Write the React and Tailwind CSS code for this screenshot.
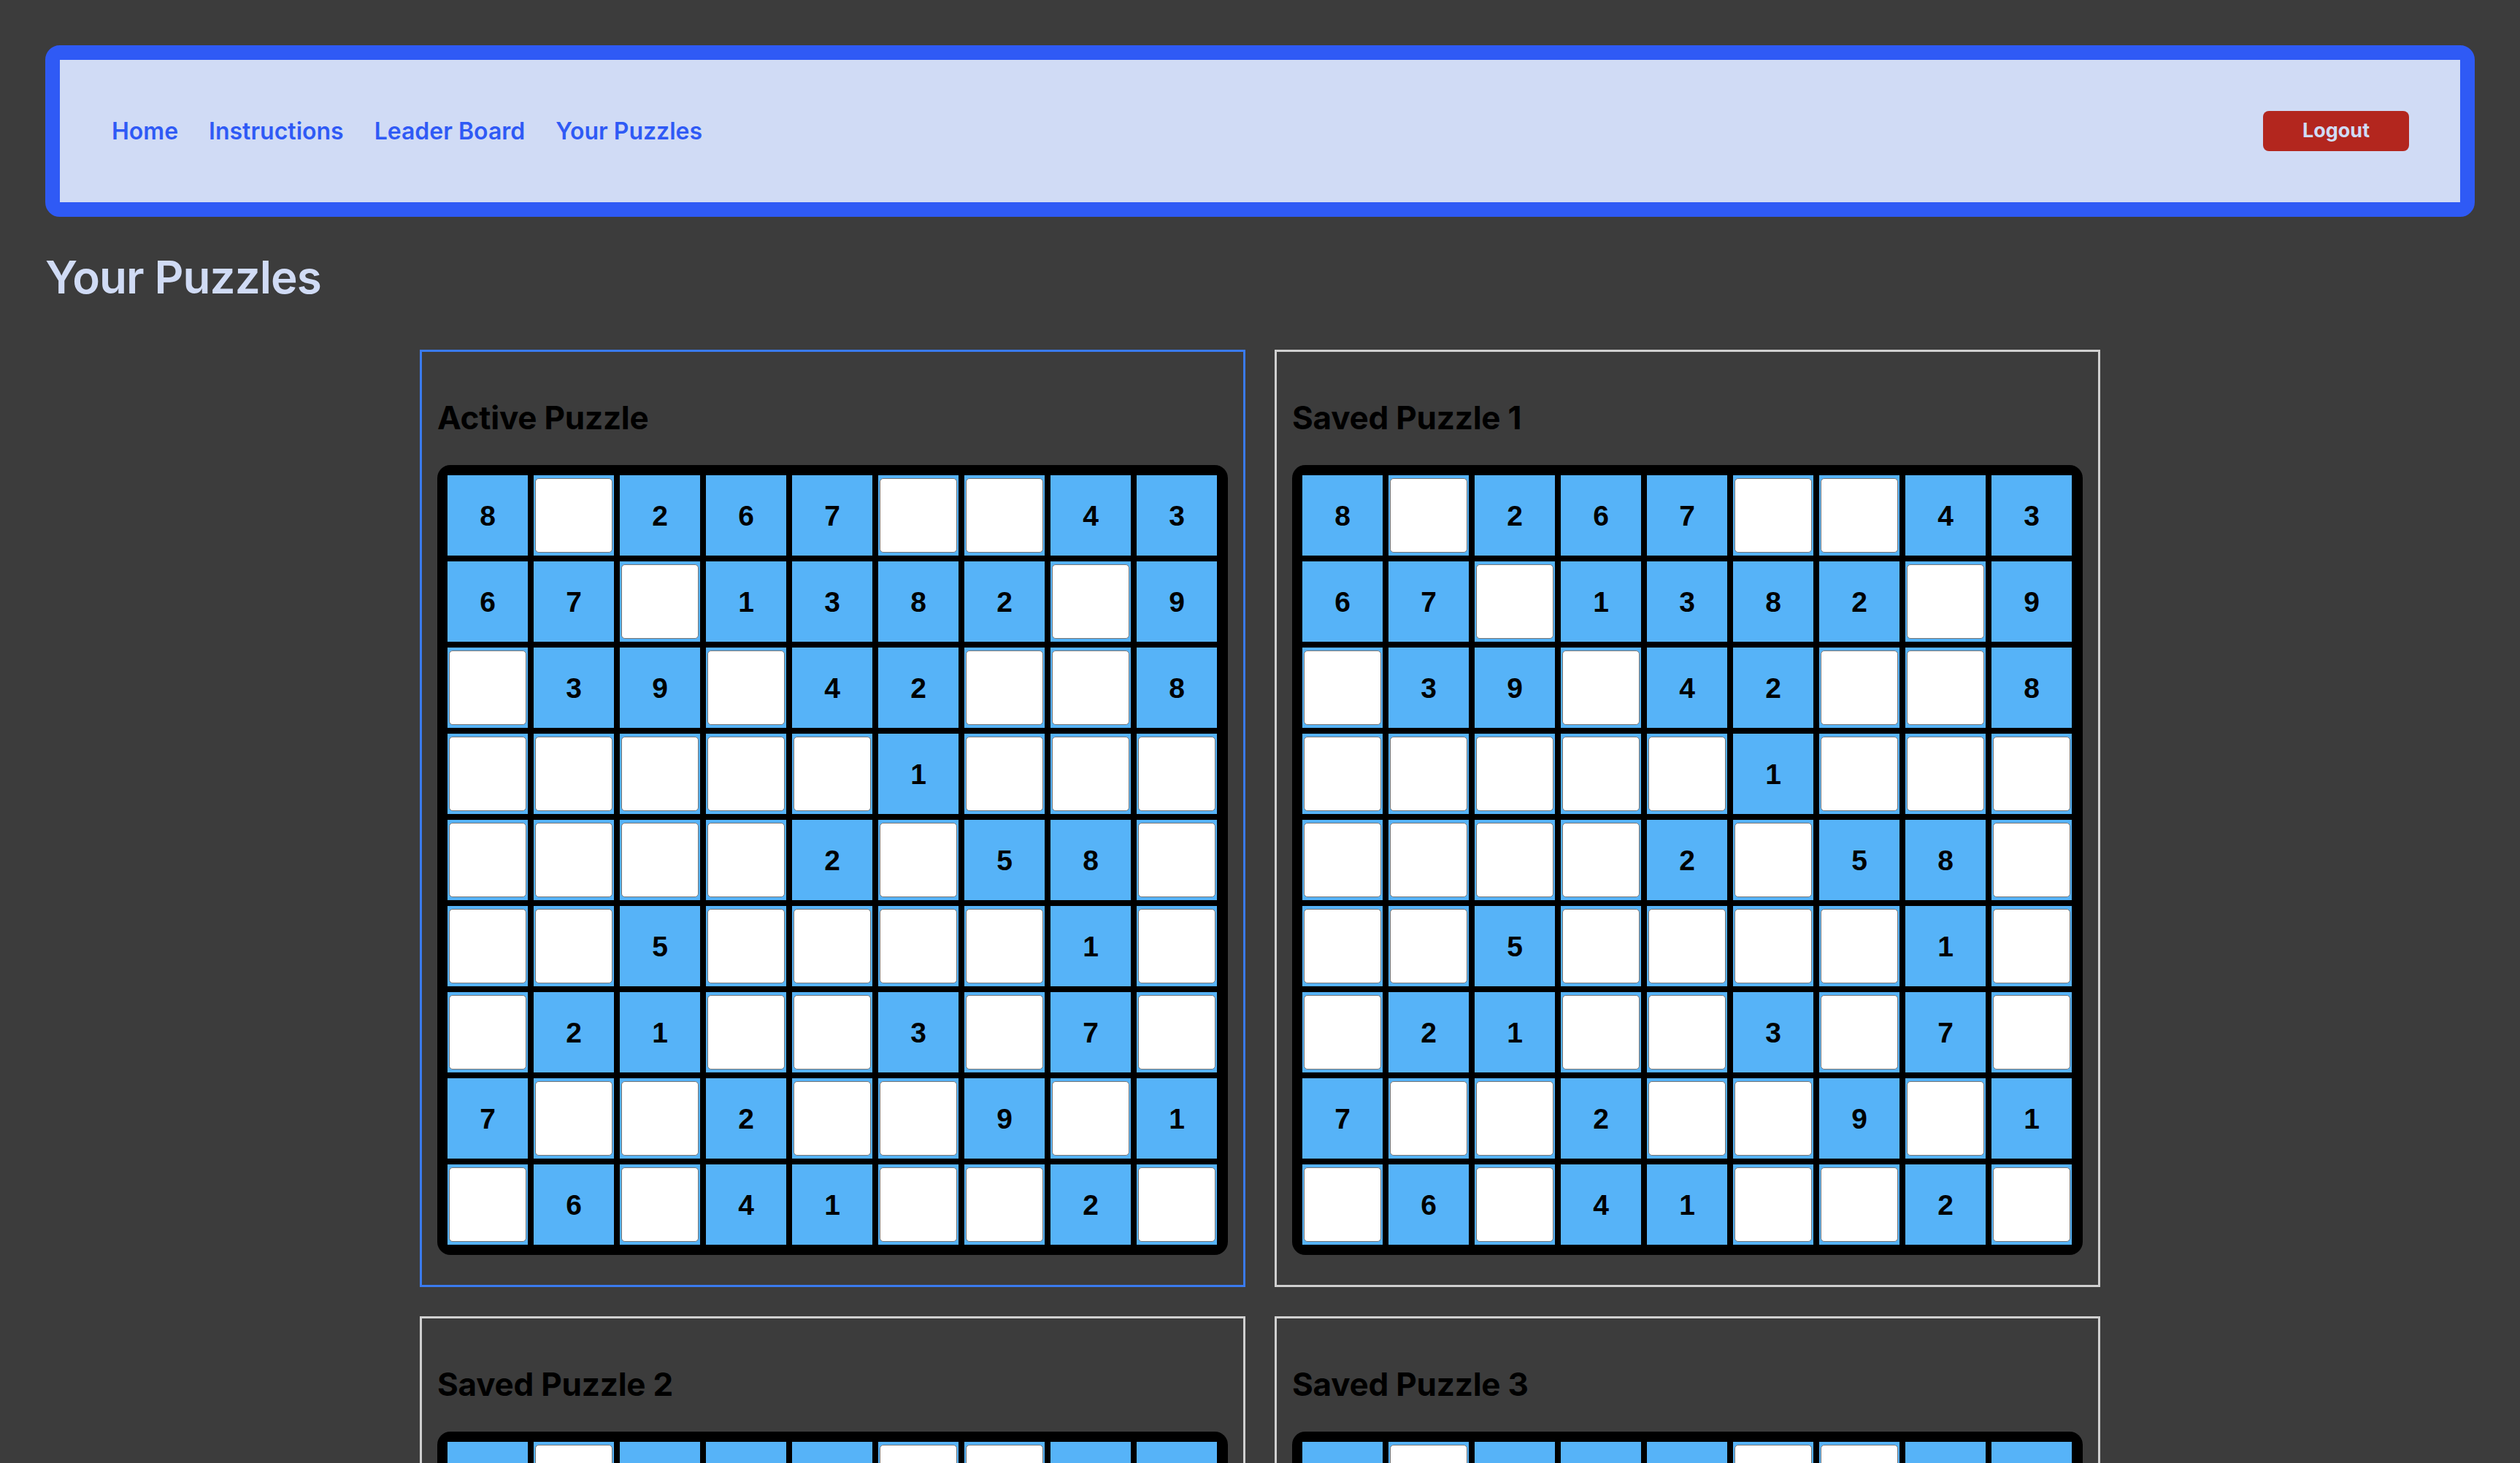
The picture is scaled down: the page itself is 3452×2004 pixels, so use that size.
import React from "react";

const PUZZLE = [
  [8, 0, 2, 6, 7, 0, 0, 4, 3],
  [6, 7, 0, 1, 3, 8, 2, 0, 9],
  [0, 3, 9, 0, 4, 2, 0, 0, 8],
  [0, 0, 0, 0, 0, 1, 0, 0, 0],
  [0, 0, 0, 0, 2, 0, 5, 8, 0],
  [0, 0, 5, 0, 0, 0, 0, 1, 0],
  [0, 2, 1, 0, 0, 3, 0, 7, 0],
  [7, 0, 0, 2, 0, 0, 9, 0, 1],
  [0, 6, 0, 4, 1, 0, 0, 2, 0],
];

function Board() {
  return (
    <div className="grid grid-cols-[repeat(9,110px)] grid-rows-[repeat(9,110px)] gap-[8px] rounded-[18px] bg-black p-[14px]">
      {PUZZLE.flat().map((v, i) => (
        <div
          key={i}
          className="flex items-center justify-center bg-[#56b3f8]"
        >
          {v ? (
            <span className="font-['Liberation_Sans',Arial,sans-serif] text-[39px] font-bold leading-none text-black">
              {v}
            </span>
          ) : (
            <div className="h-[102px] w-[106px] rounded-[5px] border-[1.5px] border-[#767676] bg-white" />
          )}
        </div>
      ))}
    </div>
  );
}

function Card({ title, active }) {
  return (
    <div
      className={
        "flex flex-col border-[3px] bg-[#3c3c3c] px-[21px] pb-[41px] pt-[63px] " +
        (active ? "border-[#3a7bf0]" : "border-[#d0d0d0]")
      }
    >
      <h2 className="mb-[38px] h-[54px] text-[44px] font-bold leading-[54px] tracking-[-0.005em] text-black">
        {title}
      </h2>
      <Board />
    </div>
  );
}

export default function App() {
  return (
    <div className="min-h-screen bg-[#3c3c3c] px-[62px] pb-[80px] pt-[62px] font-['Inter','Noto_Sans',sans-serif]">
      <nav className="flex items-center justify-between rounded-[20px] border-[20px] border-[#2f5af5] bg-[#d0dbf5] px-[71px] py-[70px]">
        <div className="flex items-center gap-[42px] text-[32px] font-semibold leading-[55px] text-[#2f5af5]">
          <a href="#">Home</a>
          <a href="#">Instructions</a>
          <a href="#">Leader Board</a>
          <a href="#">Your Puzzles</a>
        </div>
        <button className="mr-[-1px] h-[55px] w-[200px] rounded-[8px] bg-[#b3261e] text-[27px] font-bold text-[#d0dbf5]">
          Logout
        </button>
      </nav>

      <h1 className="mt-[46px] text-[62px] font-semibold leading-[74px] tracking-[-0.015em] text-[#d0dbf5]">
        Your Puzzles
      </h1>

      <div className="mt-[62px] grid grid-cols-[1131px_1131px] justify-center gap-x-[40px] gap-y-[40px]">
        <Card title="Active Puzzle" active />
        <Card title="Saved Puzzle 1" />
        <Card title="Saved Puzzle 2" />
        <Card title="Saved Puzzle 3" />
      </div>
    </div>
  );
}
